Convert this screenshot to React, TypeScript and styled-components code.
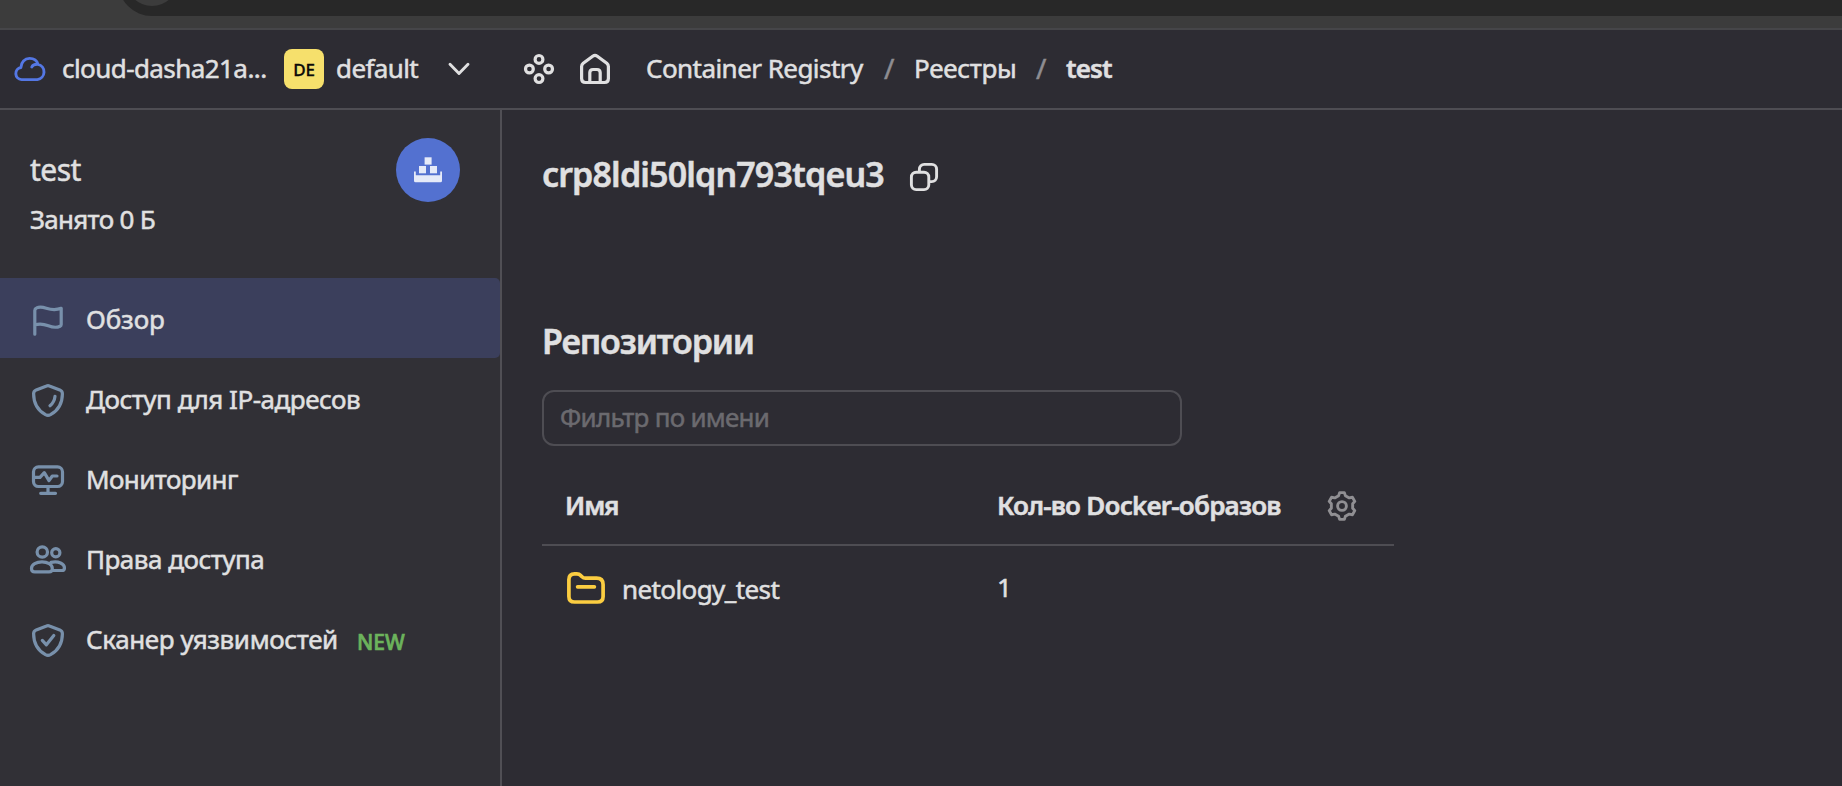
import React from 'react';
import styled, { createGlobalStyle } from 'styled-components';

const GlobalStyle = createGlobalStyle`
  *, *::before, *::after { box-sizing: border-box; }
  html, body { margin: 0; padding: 0; }
  body {
    background: #2d2c33;
    color: #e0e0e1;
    font-family: "Noto Sans", "Open Sans", sans-serif;
    font-size: 26px;
    overflow: hidden;
  }
`;

const Page = styled.div`
  display: flex;
  flex-direction: column;
  width: 100%;
  height: 100vh;
  min-height: 786px;
  overflow: hidden;
`;

/* Browser chrome strip */
const BrowserStrip = styled.div`
  flex: none;
  height: 30px;
  background: #3c3c3c;
  border-bottom: 2px solid #464649;
  overflow: hidden;
`;

const AddressBar = styled.div`
  display: flex;
  align-items: flex-end;
  height: 68px;
  margin: -52px 0 0 118px;
  padding: 0 0 10px 8px;
  border-radius: 34px 0 0 34px;
  background: #282828;
`;

const SiteInfo = styled.div`
  width: 52px;
  height: 52px;
  border-radius: 50%;
  background: #3c3c3c;
`;

/* Header */
const Header = styled.header`
  flex: none;
  display: flex;
  align-items: center;
  height: 80px;
  padding-left: 14px;
  border-bottom: 2px solid #4e4d53;
`;

const Text = styled.span<{ $track?: number; $weight?: number }>`
  line-height: 36px;
  white-space: nowrap;
  letter-spacing: ${p => p.$track ?? 0}px;
  font-weight: ${p => p.$weight ?? 400};
  -webkit-text-stroke: 0.5px currentColor;
`;

const CloudName = styled(Text)`
  width: 222px;
  margin-left: 16px;
  padding-bottom: 2px;
`;

const FolderBadge = styled.span`
  display: flex;
  align-items: center;
  justify-content: center;
  width: 40px;
  height: 40px;
  border-radius: 8px;
  background: #f6e06c;
  color: #0c0b08;
  font-size: 17px;
  font-weight: 500;
  letter-spacing: -0.3px;
  padding-top: 1px;
  -webkit-text-stroke: 0.3px currentColor;
`;

const FolderName = styled(Text)`
  width: 113px;
  margin-left: 12px;
  padding-bottom: 2px;
`;

const HeaderActions = styled.div`
  display: flex;
  align-items: center;
  gap: 26px;
  margin-left: 55px;
`;

const Breadcrumbs = styled.nav`
  display: flex;
  align-items: center;
  margin-left: 36px;
  padding-bottom: 2px;
`;

const Crumb = styled(Text)<{ $width?: number }>`
  width: ${p => (p.$width ? `${p.$width}px` : 'auto')};
`;

const Slash = styled(Text)`
  width: 30px;
  font-size: 28px;
  color: #8e8d92;
`;

/* Body */
const Body = styled.div`
  flex: 1;
  display: flex;
  min-height: 0;
`;

const Sidebar = styled.aside`
  flex: none;
  width: 502px;
  background: #313036;
  border-right: 2px solid #504f55;
`;

const ResourceHead = styled.div`
  display: flex;
  justify-content: space-between;
  height: 168px;
  padding: 28px 40px 0 30px;
`;

const ResourceInfo = styled.div`
  display: flex;
  flex-direction: column;
  padding-top: 12px;
`;

const ResourceName = styled(Text)`
  font-size: 30px;
  line-height: 40px;
`;

const ResourceUsage = styled(Text)`
  margin-top: 11px;
`;

const ServiceLogo = styled.div`
  width: 64px;
  height: 64px;
  border-radius: 50%;
  background: #5371d0;
`;

const NavItem = styled.a<{ $active?: boolean }>`
  display: flex;
  align-items: center;
  height: 80px;
  padding: 2px 0 0 28px;
  border-radius: 0 5px 5px 0;
  background: ${p => (p.$active ? '#3b3f5c' : 'transparent')};
`;

const NavLabel = styled(Text)`
  margin-left: 18px;
`;

const NewTag = styled.span`
  margin: 5px 0 0 19px;
  color: #6cb35c;
  font-size: 21px;
  line-height: 30px;
  font-weight: 500;
  -webkit-text-stroke: 0.7px currentColor;
`;

const Main = styled.main`
  flex: 1;
  padding: 44px 0 0 40px;
`;

const TitleRow = styled.div`
  display: flex;
  align-items: center;
  height: 40px;
`;

const Heading = styled.h1<{ $track: number }>`
  margin: 0;
  min-width: 368px;
  font-size: 34px;
  line-height: 40px;
  font-weight: 600;
  letter-spacing: ${p => p.$track}px;
  white-space: nowrap;
  -webkit-text-stroke: 0.5px currentColor;
`;

const Section = styled.section`
  margin-top: 127px;
`;

const FilterInput = styled.input`
  display: block;
  width: 640px;
  height: 56px;
  margin-top: 29px;
  padding: 0 16px 2px;
  border: 2px solid #4e4d53;
  border-radius: 12px;
  outline: none;
  background: transparent;
  color: inherit;
  font: inherit;
  letter-spacing: -0.75px;
  -webkit-text-stroke: 0.5px currentColor;
  &::placeholder { color: #6b6a6f; opacity: 1; }
`;

const Table = styled.div`
  width: 852px;
  margin-top: 20px;
`;

const TableRow = styled.div<{ $head?: boolean }>`
  display: grid;
  grid-template-columns: 432px 330px 1fr;
  align-items: center;
  height: ${p => (p.$head ? 80 : 82)}px;
  padding-left: 23px;
  border-bottom: ${p => (p.$head ? '2px solid #4e4d53' : 'none')};
`;

const RepoCell = styled.div`
  display: flex;
  align-items: center;
  padding-left: 2px;
`;

const RepoName = styled(Text)`
  margin: 4px 0 0 17px;
`;

const Glyph = styled.svg<{ $stroke?: number }>`
  display: block;
  flex: none;
  overflow: visible;
  fill: none;
  stroke: currentColor;
  stroke-width: ${p => p.$stroke ?? 2.9};
  stroke-linecap: round;
  stroke-linejoin: round;
`;

const CloudGlyph = styled(Glyph)`color: #5477e4;`;
const NavGlyph = styled(Glyph)`color: #7890ab;`;
const FolderGlyph = styled(Glyph)`color: #fbcd41; margin-top: 1px;`;
const GearGlyph = styled(Glyph)`color: #908f93; margin-top: 2px;`;
const CopyGlyph = styled(Glyph)`margin-top: 6px;`;

const ShieldOutline = () => (
  <path d="M14.6 2 4.2 5.9Q1.6 7 1.6 9.7C1.6 19.6 6.8 26.9 13.5 30.7Q16 32 18.5 30.7C25.2 26.9 30.4 19.6 30.4 9.7Q30.4 7 27.8 5.9L17.4 2Q16 1.4 14.6 2Z" />
);

const gearPath = (() => {
  const profile: [number, number][] = [[13.6, -10], [13.6, 10], [10.9, 18], [10.9, 42]];
  const points: string[] = [];
  for (let tooth = 0; tooth < 6; tooth++) {
    for (const [r, deg] of profile) {
      const a = ((tooth * 60 + deg) * Math.PI) / 180;
      points.push(`${(15 + r * Math.sin(a)).toFixed(2)} ${(15 - r * Math.cos(a)).toFixed(2)}`);
    }
  }
  return `M${points.join('L')}Z`;
})();

const navItems = [
  {
    label: 'Обзор', track: -0.1, active: true,
    icon: (
      <g transform="translate(5 6)">
        <path d="M1.8 29.2V5.4Q1.8 3.6 3.6 2.9C11.5-.6 16 8 28.2 3.3V19.4Q28.2 20.6 27 21.2C17.5 25.8 13.5 15.8 1.8 20" />
      </g>
    ),
  },
  {
    label: 'Доступ для IP-адресов', track: -0.49,
    icon: <g transform="translate(4 5)"><ShieldOutline /><path d="M23 12.3C22.6 16 21 19.2 18 21.8" /></g>,
  },
  {
    label: 'Мониторинг', track: -0.6,
    icon: (
      <g transform="translate(4 6.3)">
        <rect x="1.5" y="1.5" width="29" height="19.7" rx="5" />
        <path d="M2.5 12H8L12.3 7.3 17 15.3 20.3 10.7H25M16 21.5V28M8.7 28H23.5" />
      </g>
    ),
  },
  {
    label: 'Права доступа', track: -0.5,
    icon: (
      <g transform="translate(2 6)">
        <circle cx="12.3" cy="7" r="5.2" />
        <circle cx="25.8" cy="7.8" r="4.1" />
        <path d="M1.5 23.4C1.5 19.5 6.5 16.9 12 16.9S22.3 19.5 22.3 23.4Q22.3 26.9 19 26.9H4.8Q1.5 26.9 1.5 23.4ZM21 17.4C28.5 15.6 34.5 19 34.5 22.9Q34.5 25.5 31.5 25.5H22.6" />
      </g>
    ),
  },
  {
    label: 'Сканер уязвимостей', track: -0.38, isNew: true,
    icon: <g transform="translate(4 5)"><ShieldOutline /><path d="M10.3 16.4 14.4 20.8 21.8 11.4" /></g>,
  },
];

export default function App() {
  return (
    <Page>
      <GlobalStyle />
      <BrowserStrip>
        <AddressBar><SiteInfo /></AddressBar>
      </BrowserStrip>

      <Header>
        <CloudGlyph width="32" height="24" viewBox="0 0 32 24">
          <path d="M7.5 22.6A6.1 6.1 0 0 1 6.9 10.5C7 5.2 10.8 1.4 15.6 1.4 19.8 1.4 23 3.8 24 7.3A7.8 7.8 0 0 1 23.4 22.6ZM24 7.3C20.8 7.1 18.6 8 17.8 10" />
        </CloudGlyph>
        <CloudName $track={-0.57}>cloud-dasha21a...</CloudName>
        <FolderBadge>DE</FolderBadge>
        <FolderName $track={-0.6}>default</FolderName>
        <Glyph width="20" height="12" viewBox="0 0 20 12">
          <path d="M1 1.2 10 10.4 19 1.2" />
        </Glyph>
        <HeaderActions>
          <Glyph width="30" height="30" viewBox="0 0 30 30" $stroke={3.2}>
            <circle cx="15" cy="5.4" r="3.9" />
            <circle cx="5.4" cy="15" r="3.9" />
            <circle cx="24.6" cy="15" r="3.9" />
            <circle cx="15" cy="24.6" r="3.9" />
          </Glyph>
          <Glyph width="30" height="30" viewBox="0 0 30 30" $stroke={3.2}>
            <path d="M5.5 28.5H24.5Q28.4 28.5 28.4 24.6V12.6Q28.4 10.6 26.8 9.3L17.3 2.2Q15 .6 12.7 2.2L3.2 9.3Q1.6 10.6 1.6 12.6V24.6Q1.6 28.5 5.5 28.5ZM9.8 28V18.8Q9.8 15.5 13 15.5H17Q20.2 15.5 20.2 18.8V28" />
          </Glyph>
        </HeaderActions>
        <Breadcrumbs>
          <Crumb $width={238} $track={-0.55}>Container Registry</Crumb>
          <Slash>/</Slash>
          <Crumb $width={122} $track={-0.3}>Реестры</Crumb>
          <Slash>/</Slash>
          <Crumb $weight={600} $track={-0.9}>test</Crumb>
        </Breadcrumbs>
      </Header>

      <Body>
        <Sidebar>
          <ResourceHead>
            <ResourceInfo>
              <ResourceName $track={-0.5}>test</ResourceName>
              <ResourceUsage $track={-0.7}>Занято 0 Б</ResourceUsage>
            </ResourceInfo>
            <ServiceLogo>
              <svg width="64" height="64" viewBox="0 0 64 64" fill="#e5eaf8">
                <rect x="28.6" y="19.3" width="7" height="7.3" />
                <rect x="23" y="28" width="7" height="7.3" />
                <rect x="34" y="28" width="7" height="7.3" />
                <path d="M18 33.6H19.8V37.2H44.2V33.6H46V42.8Q46 44.3 44.5 44.3H19.5Q18 44.3 18 42.8Z" />
              </svg>
            </ServiceLogo>
          </ResourceHead>
          {navItems.map(item => (
            <NavItem key={item.label} $active={item.active}>
              <NavGlyph width="40" height="40" viewBox="0 0 40 40" $stroke={3.2}>{item.icon}</NavGlyph>
              <NavLabel $track={item.track}>{item.label}</NavLabel>
              {item.isNew && <NewTag>NEW</NewTag>}
            </NavItem>
          ))}
        </Sidebar>

        <Main>
          <TitleRow>
            <Heading $track={-0.86}>crp8ldi50lqn793tqeu3</Heading>
            <CopyGlyph width="28" height="28" viewBox="0 0 28 28">
              <rect x="1.4" y="9.2" width="17.4" height="17.4" rx="4.8" />
              <path d="M9.4 8.4V6.2A4.8 4.8 0 0 1 14.2 1.4H21.8A4.8 4.8 0 0 1 26.6 6.2V13.8A4.8 4.8 0 0 1 21.8 18.6H20" />
            </CopyGlyph>
          </TitleRow>
          <Section>
            <Heading as="h2" $track={-1.15}>Репозитории</Heading>
            <FilterInput placeholder="Фильтр по имени" />
            <Table>
              <TableRow $head>
                <Text $weight={600} $track={-1.1}>Имя</Text>
                <Text $weight={600} $track={-0.79}>Кол-во Docker-образов</Text>
                <GearGlyph width="30" height="30" viewBox="0 0 30 30">
                  <path d={gearPath} />
                  <circle cx="15" cy="15" r="4.4" />
                </GearGlyph>
              </TableRow>
              <TableRow>
                <RepoCell>
                  <FolderGlyph width="38" height="32" viewBox="0 0 38 32" $stroke={3.7}>
                    <path d="M1.9 7.6Q1.9 1.9 7.6 1.9H9.8Q12.2 1.9 13.8 3.6L15 4.8Q16.4 6.2 18.4 6.2H29.6Q36.1 6.2 36.1 12.7V24.4Q36.1 30 30.4 30H7.6Q1.9 30 1.9 24.4ZM10.6 14.8H27.4" />
                  </FolderGlyph>
                  <RepoName $track={-0.6}>netology_test</RepoName>
                </RepoCell>
                <Text>1</Text>
                <span />
              </TableRow>
            </Table>
          </Section>
        </Main>
      </Body>
    </Page>
  );
}
